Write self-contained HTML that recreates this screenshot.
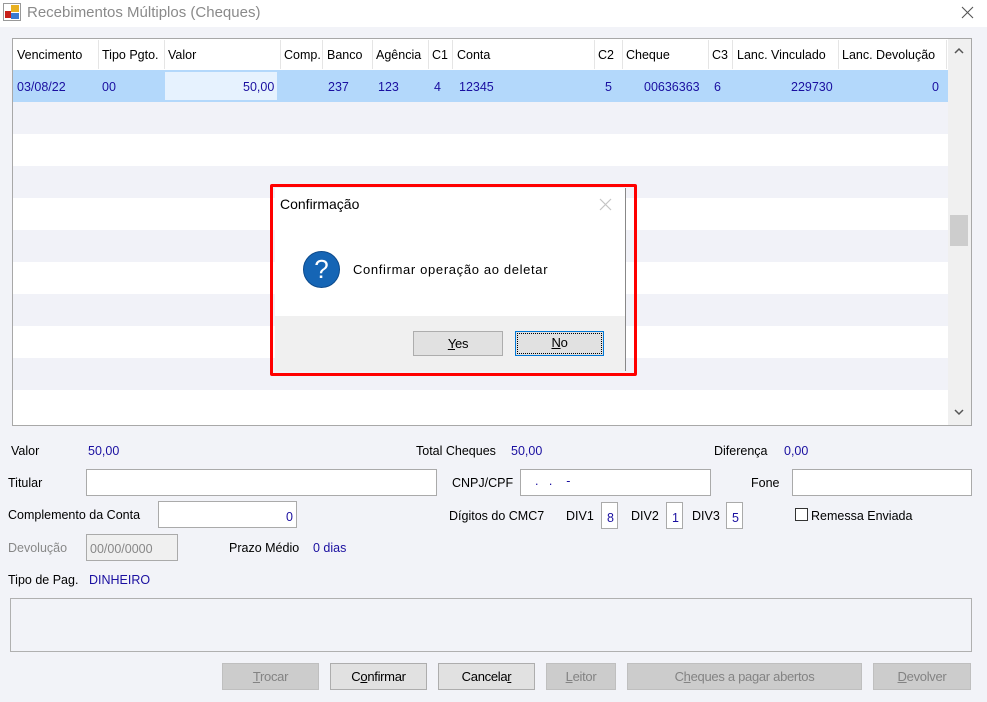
<!DOCTYPE html>
<html><head><meta charset="utf-8"><style>
*{box-sizing:border-box;margin:0;padding:0}
body{width:987px;height:702px;background:#f2f3f8;font-family:"Liberation Sans",sans-serif;font-size:12.5px;color:#000;position:relative;overflow:hidden}
.a{position:absolute;white-space:nowrap}
.blue{color:#1a0fa0}
.inp{position:absolute;background:#fff;border:1px solid #aaa}
.btn{position:absolute;height:27px;border:1px solid #adadad;background:#e1e1e1;text-align:center;line-height:25px;font-size:13px;letter-spacing:-0.3px}
.dis{background:#cccccc;border-color:#bfbfbf;color:#838383}
u{text-decoration:underline}
</style></head><body>
<div class="a" style="left:0;top:0;width:987px;height:27px;background:#fff"></div>
<svg class="a" style="left:3px;top:3px" width="18" height="18"><rect x="0.5" y="0.5" width="17" height="17" fill="#fff" stroke="#999"/><rect x="8" y="2" width="8" height="7" fill="#e8b020"/><rect x="2" y="8" width="6" height="7" fill="#c8201a"/><rect x="8" y="10" width="8" height="6" fill="#3a7ad0"/></svg>
<div class="a" style="left:27px;top:4px;font-size:15px;color:#8a8a8a">Recebimentos Múltiplos (Cheques)</div>
<svg class="a" style="left:961px;top:6px" width="13" height="13"><path d="M1 1L12 12M12 1L1 12" stroke="#555" stroke-width="1.1"/></svg>

<!-- grid -->
<div class="a" style="left:12px;top:38px;width:960px;height:388px;border:1px solid #a8a8a8;background:#fff"></div>
<div class="a" style="left:13px;top:39px;width:935px;height:31px;background:#fff"></div>
<div class="a" style="left:13px;top:70px;width:935px;height:32px;background:#b3d8fb"></div>
<div class="a" style="left:165px;top:72px;width:112px;height:28px;background:#e6f2fe"></div>
<div class="a" style="left:13px;top:102px;width:935px;height:32px;background:#f1f2f8"></div>
<div class="a" style="left:13px;top:166px;width:935px;height:32px;background:#f1f2f8"></div>
<div class="a" style="left:13px;top:230px;width:935px;height:32px;background:#f1f2f8"></div>
<div class="a" style="left:13px;top:294px;width:935px;height:32px;background:#f1f2f8"></div>
<div class="a" style="left:13px;top:358px;width:935px;height:32px;background:#f1f2f8"></div>
<div class="a" style="left:98px;top:40px;width:1px;height:29px;background:#e5e5e5"></div>
<div class="a" style="left:164px;top:40px;width:1px;height:29px;background:#e5e5e5"></div>
<div class="a" style="left:280px;top:40px;width:1px;height:29px;background:#e5e5e5"></div>
<div class="a" style="left:322px;top:40px;width:1px;height:29px;background:#e5e5e5"></div>
<div class="a" style="left:372px;top:40px;width:1px;height:29px;background:#e5e5e5"></div>
<div class="a" style="left:428px;top:40px;width:1px;height:29px;background:#e5e5e5"></div>
<div class="a" style="left:452px;top:40px;width:1px;height:29px;background:#e5e5e5"></div>
<div class="a" style="left:594px;top:40px;width:1px;height:29px;background:#e5e5e5"></div>
<div class="a" style="left:622px;top:40px;width:1px;height:29px;background:#e5e5e5"></div>
<div class="a" style="left:708px;top:40px;width:1px;height:29px;background:#e5e5e5"></div>
<div class="a" style="left:732px;top:40px;width:1px;height:29px;background:#e5e5e5"></div>
<div class="a" style="left:838px;top:40px;width:1px;height:29px;background:#e5e5e5"></div>
<div class="a" style="left:946px;top:40px;width:1px;height:29px;background:#e5e5e5"></div>
<div class="a" style="top:48px;left:17px">Vencimento</div>
<div class="a" style="top:48px;left:102px">Tipo Pgto.</div>
<div class="a" style="top:48px;left:168px">Valor</div>
<div class="a" style="top:48px;left:284px">Comp.</div>
<div class="a" style="top:48px;left:327px">Banco</div>
<div class="a" style="top:48px;left:376px">Agência</div>
<div class="a" style="top:48px;left:432px">C1</div>
<div class="a" style="top:48px;left:457px">Conta</div>
<div class="a" style="top:48px;left:598px">C2</div>
<div class="a" style="top:48px;left:626px">Cheque</div>
<div class="a" style="top:48px;left:712px">C3</div>
<div class="a" style="top:48px;left:737px">Lanc. Vinculado</div>
<div class="a" style="top:48px;left:842px">Lanc. Devolução</div>
<div class="a blue" style="top:80px;left:17px">03/08/22</div>
<div class="a blue" style="top:80px;left:102px">00</div>
<div class="a blue" style="top:80px;left:243px">50,00</div>
<div class="a blue" style="top:80px;left:328px">237</div>
<div class="a blue" style="top:80px;left:378px">123</div>
<div class="a blue" style="top:80px;left:434px">4</div>
<div class="a blue" style="top:80px;left:459px">12345</div>
<div class="a blue" style="top:80px;left:605px">5</div>
<div class="a blue" style="top:80px;left:644px">00636363</div>
<div class="a blue" style="top:80px;left:714px">6</div>
<div class="a blue" style="top:80px;left:791px">229730</div>
<div class="a blue" style="top:80px;left:932px">0</div>
<div class="a" style="left:948px;top:39px;width:23px;height:386px;background:#f0f0f0"></div>
<div class="a" style="left:950px;top:215px;width:18px;height:31px;background:#cdcdcd"></div>
<svg class="a" style="left:953px;top:46px" width="12" height="10"><path d="M2 7L6 3L10 7" stroke="#555" stroke-width="1.5" fill="none"/></svg>
<svg class="a" style="left:953px;top:407px" width="12" height="10"><path d="M2 3L6 7L10 3" stroke="#555" stroke-width="1.5" fill="none"/></svg>

<!-- dialog -->
<div class="a" style="left:270px;top:184px;width:367px;height:192px;border:3px solid #f00;border-radius:2px"></div>
<div class="a" style="left:275px;top:188px;width:351px;height:183px;background:#fff;border-right:1px solid #888"></div>
<div class="a" style="left:275px;top:316px;width:350px;height:55px;background:#f0f0f0"></div>
<div class="a" style="left:280px;top:196px;font-size:14px">Confirmação</div>
<svg class="a" style="left:599px;top:198px" width="13" height="13"><path d="M1 1L12 12M12 1L1 12" stroke="#c4c4c4" stroke-width="1.2"/></svg>
<div class="a" style="left:303px;top:251px;width:37px;height:37px;border-radius:50%;background:#1565b5;border:1px solid #0c4a8c;color:#fff;font-size:26px;line-height:34px;text-align:center">?</div>
<div class="a" style="left:353px;top:262px;font-size:13px;letter-spacing:0.65px">Confirmar operação ao deletar</div>
<div class="btn" style="left:413px;top:331px;width:90px;height:25px;line-height:23px"><u>Y</u>es</div>
<div class="btn" style="left:515px;top:331px;width:89px;height:25px;line-height:22px;border:1px solid #0078d7;outline:1px dotted #000;outline-offset:-3px"><u>N</u>o</div>

<!-- form -->
<div class="a" style="left:11px;top:444px">Valor</div>
<div class="a blue" style="left:88px;top:444px">50,00</div>
<div class="a" style="left:416px;top:444px">Total Cheques</div>
<div class="a blue" style="left:511px;top:444px">50,00</div>
<div class="a" style="left:714px;top:444px">Diferença</div>
<div class="a blue" style="left:784px;top:444px">0,00</div>

<div class="a" style="left:8px;top:476px">Titular</div>
<div class="inp" style="left:86px;top:469px;width:351px;height:27px"></div>
<div class="a" style="left:452px;top:476px">CNPJ/CPF</div>
<div class="inp" style="left:520px;top:469px;width:191px;height:27px"></div>
<div class="a blue" style="left:535px;top:474px">.&nbsp;&nbsp;&nbsp;.&nbsp;&nbsp;&nbsp;&nbsp;-</div>
<div class="a" style="left:751px;top:476px">Fone</div>
<div class="inp" style="left:792px;top:469px;width:180px;height:27px"></div>

<div class="a" style="left:8px;top:508px">Complemento da Conta</div>
<div class="inp" style="left:158px;top:501px;width:139px;height:27px"></div>
<div class="a blue" style="left:286px;top:510px">0</div>
<div class="a" style="left:449px;top:509px">Dígitos do CMC7</div>
<div class="a" style="left:566px;top:509px">DIV1</div>
<div class="inp" style="left:601px;top:502px;width:17px;height:27px"></div>
<div class="a blue" style="left:607px;top:511px">8</div>
<div class="a" style="left:631px;top:509px">DIV2</div>
<div class="inp" style="left:666px;top:502px;width:17px;height:27px"></div>
<div class="a blue" style="left:672px;top:511px">1</div>
<div class="a" style="left:692px;top:509px">DIV3</div>
<div class="inp" style="left:726px;top:502px;width:17px;height:27px"></div>
<div class="a blue" style="left:732px;top:511px">5</div>
<div class="a" style="left:795px;top:508px;width:13px;height:13px;border:1px solid #333;background:#fff"></div>
<div class="a" style="left:811px;top:509px">Remessa Enviada</div>

<div class="a" style="left:8px;top:541px;color:#888">Devolução</div>
<div class="inp" style="left:86px;top:534px;width:92px;height:27px;background:#f0f0f0;border-color:#aaa"></div>
<div class="a" style="left:90px;top:542px;color:#888">00/00/0000</div>
<div class="a" style="left:229px;top:541px">Prazo Médio</div>
<div class="a blue" style="left:313px;top:541px">0 dias</div>

<div class="a" style="left:8px;top:573px">Tipo de Pag.</div>
<div class="a blue" style="left:89px;top:573px">DINHEIRO</div>

<div class="a" style="left:10px;top:598px;width:962px;height:54px;border:1px solid #b0b0b0;background:#f2f3f8"></div>

<div class="btn dis" style="left:222px;top:663px;width:97px"><u>T</u>rocar</div>
<div class="btn" style="left:330px;top:663px;width:97px">C<u>o</u>nfirmar</div>
<div class="btn" style="left:438px;top:663px;width:97px">Cancela<u>r</u></div>
<div class="btn dis" style="left:546px;top:663px;width:70px"><u>L</u>eitor</div>
<div class="btn dis" style="left:627px;top:663px;width:235px">C<u>h</u>eques a pagar abertos</div>
<div class="btn dis" style="left:873px;top:663px;width:98px"><u>D</u>evolver</div>
</body></html>
